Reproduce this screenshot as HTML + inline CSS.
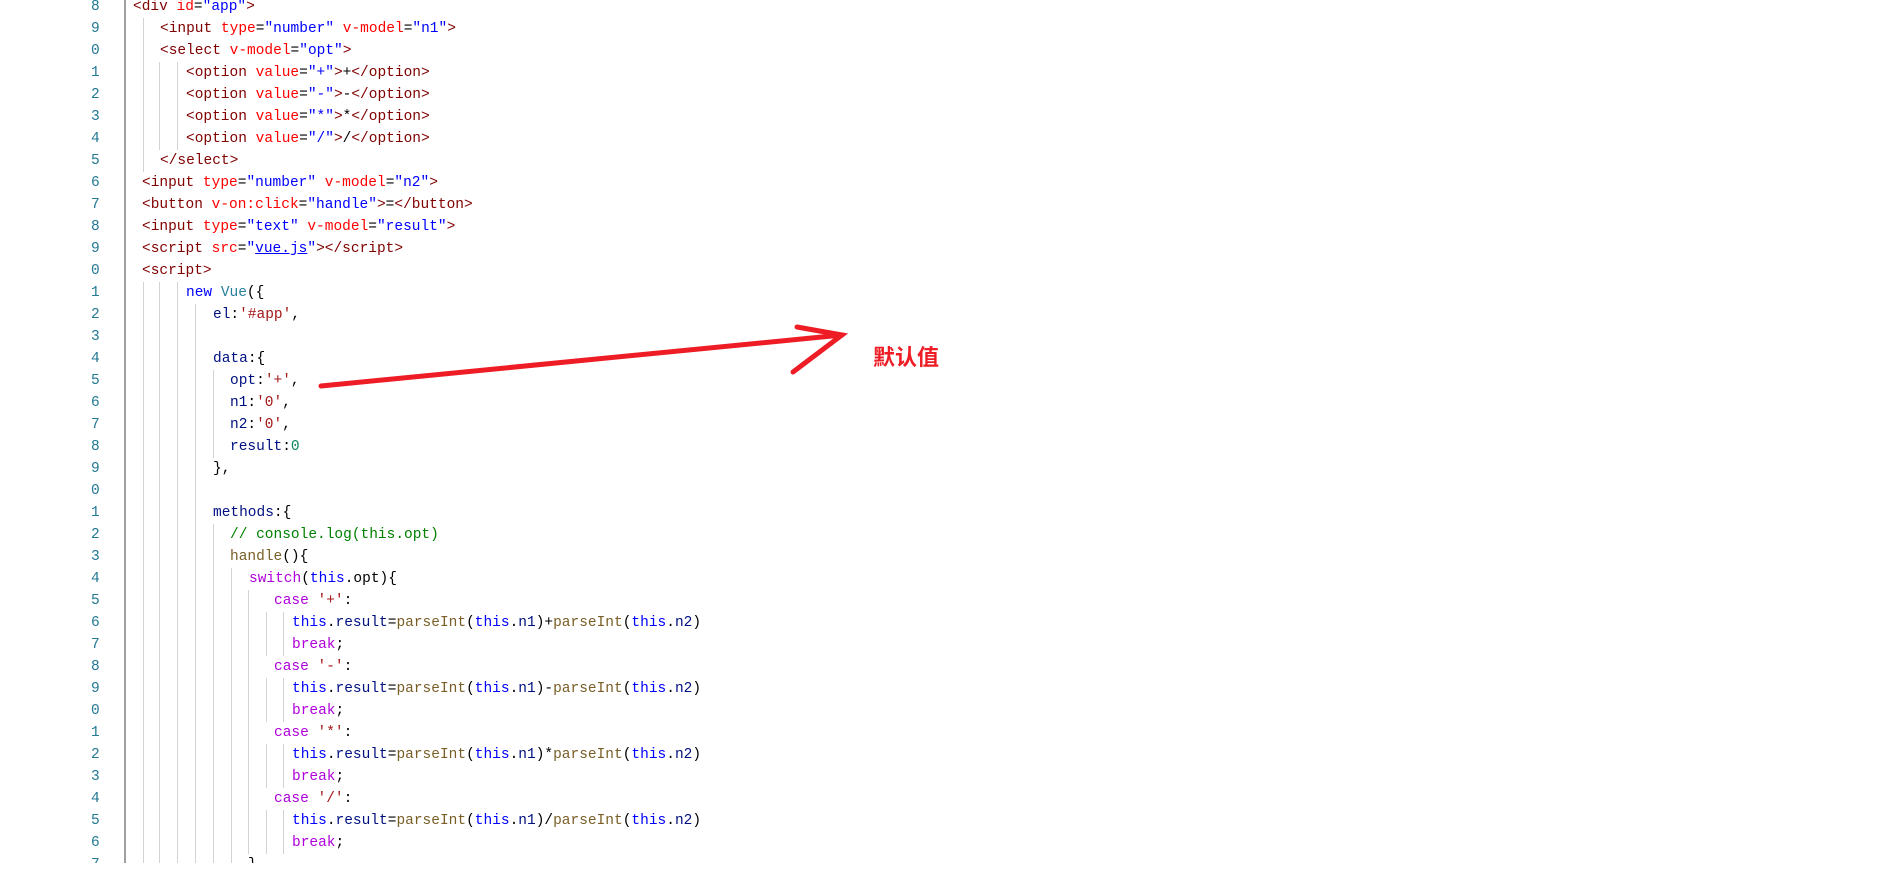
<!DOCTYPE html>
<html><head><meta charset="utf-8"><style>
html,body{margin:0;padding:0;background:#fff;width:1899px;height:880px;overflow:hidden}
#code{position:absolute;left:0;top:0;width:1899px;height:863px;overflow:hidden}
.l{position:absolute;font-family:"Liberation Mono",monospace;font-size:14.5px;line-height:22px;white-space:pre;color:#000}
.n{position:absolute;left:91px;font-family:"Liberation Mono",monospace;font-size:14.5px;line-height:22px;color:#237893}
.g{position:absolute;width:1px;background:#d3d3d3}
.t{color:#800000}.a{color:#ff0000}.v{color:#0000ff}.k{color:#0000ff}.c{color:#267f99}.p{color:#001080}.s{color:#a31515}.num{color:#098658}.cm{color:#008000}.kw{color:#af00db}.f{color:#795e26}
</style></head><body>
<div id="code">
<div style="position:absolute;left:124px;top:0;width:2px;height:863px;background:#a0a0a0"></div>
<!-- guides -->
<div class="g" style="left:143px;top:18px;height:154px"></div>
<div class="g" style="left:159px;top:62px;height:88px"></div>
<div class="g" style="left:177px;top:62px;height:88px"></div>
<div class="g" style="left:143px;top:282px;height:600px"></div>
<div class="g" style="left:159px;top:282px;height:600px"></div>
<div class="g" style="left:177px;top:282px;height:600px"></div>
<div class="g" style="left:195px;top:304px;height:600px"></div>
<div class="g" style="left:213px;top:370px;height:88px"></div>
<div class="g" style="left:213px;top:524px;height:400px"></div>
<div class="g" style="left:231px;top:568px;height:400px"></div>
<div class="g" style="left:248px;top:590px;height:264px"></div>
<div class="g" style="left:266px;top:612px;height:44px"></div>
<div class="g" style="left:266px;top:678px;height:44px"></div>
<div class="g" style="left:266px;top:744px;height:44px"></div>
<div class="g" style="left:266px;top:810px;height:44px"></div>
<div class="g" style="left:283px;top:612px;height:44px"></div>
<div class="g" style="left:283px;top:678px;height:44px"></div>
<div class="g" style="left:283px;top:744px;height:44px"></div>
<div class="g" style="left:283px;top:810px;height:44px"></div>

<div class="n" style="top:-4px">8</div><div class="l" style="left:133px;top:-4px"><span class="t">&lt;div</span> <span class="a">id</span>=<span class="v">"app"</span><span class="t">&gt;</span></div>
<div class="n" style="top:18px">9</div><div class="l" style="left:160px;top:18px"><span class="t">&lt;input</span> <span class="a">type</span>=<span class="v">"number"</span> <span class="a">v-model</span>=<span class="v">"n1"</span><span class="t">&gt;</span></div>
<div class="n" style="top:40px">0</div><div class="l" style="left:160px;top:40px"><span class="t">&lt;select</span> <span class="a">v-model</span>=<span class="v">"opt"</span><span class="t">&gt;</span></div>
<div class="n" style="top:62px">1</div><div class="l" style="left:186px;top:62px"><span class="t">&lt;option</span> <span class="a">value</span>=<span class="v">"+"</span><span class="t">&gt;</span>+<span class="t">&lt;/option&gt;</span></div>
<div class="n" style="top:84px">2</div><div class="l" style="left:186px;top:84px"><span class="t">&lt;option</span> <span class="a">value</span>=<span class="v">"-"</span><span class="t">&gt;</span>-<span class="t">&lt;/option&gt;</span></div>
<div class="n" style="top:106px">3</div><div class="l" style="left:186px;top:106px"><span class="t">&lt;option</span> <span class="a">value</span>=<span class="v">"*"</span><span class="t">&gt;</span>*<span class="t">&lt;/option&gt;</span></div>
<div class="n" style="top:128px">4</div><div class="l" style="left:186px;top:128px"><span class="t">&lt;option</span> <span class="a">value</span>=<span class="v">"/"</span><span class="t">&gt;</span>/<span class="t">&lt;/option&gt;</span></div>
<div class="n" style="top:150px">5</div><div class="l" style="left:160px;top:150px"><span class="t">&lt;/select&gt;</span></div>
<div class="n" style="top:172px">6</div><div class="l" style="left:142px;top:172px"><span class="t">&lt;input</span> <span class="a">type</span>=<span class="v">"number"</span> <span class="a">v-model</span>=<span class="v">"n2"</span><span class="t">&gt;</span></div>
<div class="n" style="top:194px">7</div><div class="l" style="left:142px;top:194px"><span class="t">&lt;button</span> <span class="a">v-on:click</span>=<span class="v">"handle"</span><span class="t">&gt;</span>=<span class="t">&lt;/button&gt;</span></div>
<div class="n" style="top:216px">8</div><div class="l" style="left:142px;top:216px"><span class="t">&lt;input</span> <span class="a">type</span>=<span class="v">"text"</span> <span class="a">v-model</span>=<span class="v">"result"</span><span class="t">&gt;</span></div>
<div class="n" style="top:238px">9</div><div class="l" style="left:142px;top:238px"><span class="t">&lt;script</span> <span class="a">src</span>=<span class="v">"<span style="text-decoration:underline">vue.js</span>"</span><span class="t">&gt;&lt;/script&gt;</span></div>
<div class="n" style="top:260px">0</div><div class="l" style="left:142px;top:260px"><span class="t">&lt;script&gt;</span></div>
<div class="n" style="top:282px">1</div><div class="l" style="left:186px;top:282px"><span class="k">new</span> <span class="c">Vue</span>({</div>
<div class="n" style="top:304px">2</div><div class="l" style="left:213px;top:304px"><span class="p">el</span>:<span class="s">'#app'</span>,</div>
<div class="n" style="top:326px">3</div>
<div class="n" style="top:348px">4</div><div class="l" style="left:213px;top:348px"><span class="p">data</span>:{</div>
<div class="n" style="top:370px">5</div><div class="l" style="left:230px;top:370px"><span class="p">opt</span>:<span class="s">'+'</span>,</div>
<div class="n" style="top:392px">6</div><div class="l" style="left:230px;top:392px"><span class="p">n1</span>:<span class="s">'0'</span>,</div>
<div class="n" style="top:414px">7</div><div class="l" style="left:230px;top:414px"><span class="p">n2</span>:<span class="s">'0'</span>,</div>
<div class="n" style="top:436px">8</div><div class="l" style="left:230px;top:436px"><span class="p">result</span>:<span class="num">0</span></div>
<div class="n" style="top:458px">9</div><div class="l" style="left:213px;top:458px">},</div>
<div class="n" style="top:480px">0</div>
<div class="n" style="top:502px">1</div><div class="l" style="left:213px;top:502px"><span class="p">methods</span>:{</div>
<div class="n" style="top:524px">2</div><div class="l" style="left:230px;top:524px"><span class="cm">// console.log(this.opt)</span></div>
<div class="n" style="top:546px">3</div><div class="l" style="left:230px;top:546px"><span class="f">handle</span>(){</div>
<div class="n" style="top:568px">4</div><div class="l" style="left:249px;top:568px"><span class="kw">switch</span>(<span class="k">this</span>.opt){</div>
<div class="n" style="top:590px">5</div><div class="l" style="left:274px;top:590px"><span class="kw">case</span> <span class="s">'+'</span>:</div>
<div class="n" style="top:612px">6</div><div class="l" style="left:292px;top:612px"><span class="k">this</span>.<span class="p">result</span>=<span class="f">parseInt</span>(<span class="k">this</span>.<span class="p">n1</span>)+<span class="f">parseInt</span>(<span class="k">this</span>.<span class="p">n2</span>)</div>
<div class="n" style="top:634px">7</div><div class="l" style="left:292px;top:634px"><span class="kw">break</span>;</div>
<div class="n" style="top:656px">8</div><div class="l" style="left:274px;top:656px"><span class="kw">case</span> <span class="s">'-'</span>:</div>
<div class="n" style="top:678px">9</div><div class="l" style="left:292px;top:678px"><span class="k">this</span>.<span class="p">result</span>=<span class="f">parseInt</span>(<span class="k">this</span>.<span class="p">n1</span>)-<span class="f">parseInt</span>(<span class="k">this</span>.<span class="p">n2</span>)</div>
<div class="n" style="top:700px">0</div><div class="l" style="left:292px;top:700px"><span class="kw">break</span>;</div>
<div class="n" style="top:722px">1</div><div class="l" style="left:274px;top:722px"><span class="kw">case</span> <span class="s">'*'</span>:</div>
<div class="n" style="top:744px">2</div><div class="l" style="left:292px;top:744px"><span class="k">this</span>.<span class="p">result</span>=<span class="f">parseInt</span>(<span class="k">this</span>.<span class="p">n1</span>)*<span class="f">parseInt</span>(<span class="k">this</span>.<span class="p">n2</span>)</div>
<div class="n" style="top:766px">3</div><div class="l" style="left:292px;top:766px"><span class="kw">break</span>;</div>
<div class="n" style="top:788px">4</div><div class="l" style="left:274px;top:788px"><span class="kw">case</span> <span class="s">'/'</span>:</div>
<div class="n" style="top:810px">5</div><div class="l" style="left:292px;top:810px"><span class="k">this</span>.<span class="p">result</span>=<span class="f">parseInt</span>(<span class="k">this</span>.<span class="p">n1</span>)/<span class="f">parseInt</span>(<span class="k">this</span>.<span class="p">n2</span>)</div>
<div class="n" style="top:832px">6</div><div class="l" style="left:292px;top:832px"><span class="kw">break</span>;</div>
<div class="n" style="top:854px">7</div><div class="l" style="left:248px;top:854px">}</div>
</div>
<svg style="position:absolute;left:0;top:0" width="1899" height="880">
<g stroke="#ee1c25" stroke-width="5" stroke-linecap="round" fill="none">
<path d="M321 386 L842 335"/>
<path d="M797 327 L842 335 L793 372"/>
</g>
</svg>
<div style="position:absolute;left:873px;top:342px;font-family:'Noto Sans CJK SC',sans-serif;font-weight:bold;font-size:22px;line-height:28px;color:#ee1c25">默认值</div>
</body></html>
